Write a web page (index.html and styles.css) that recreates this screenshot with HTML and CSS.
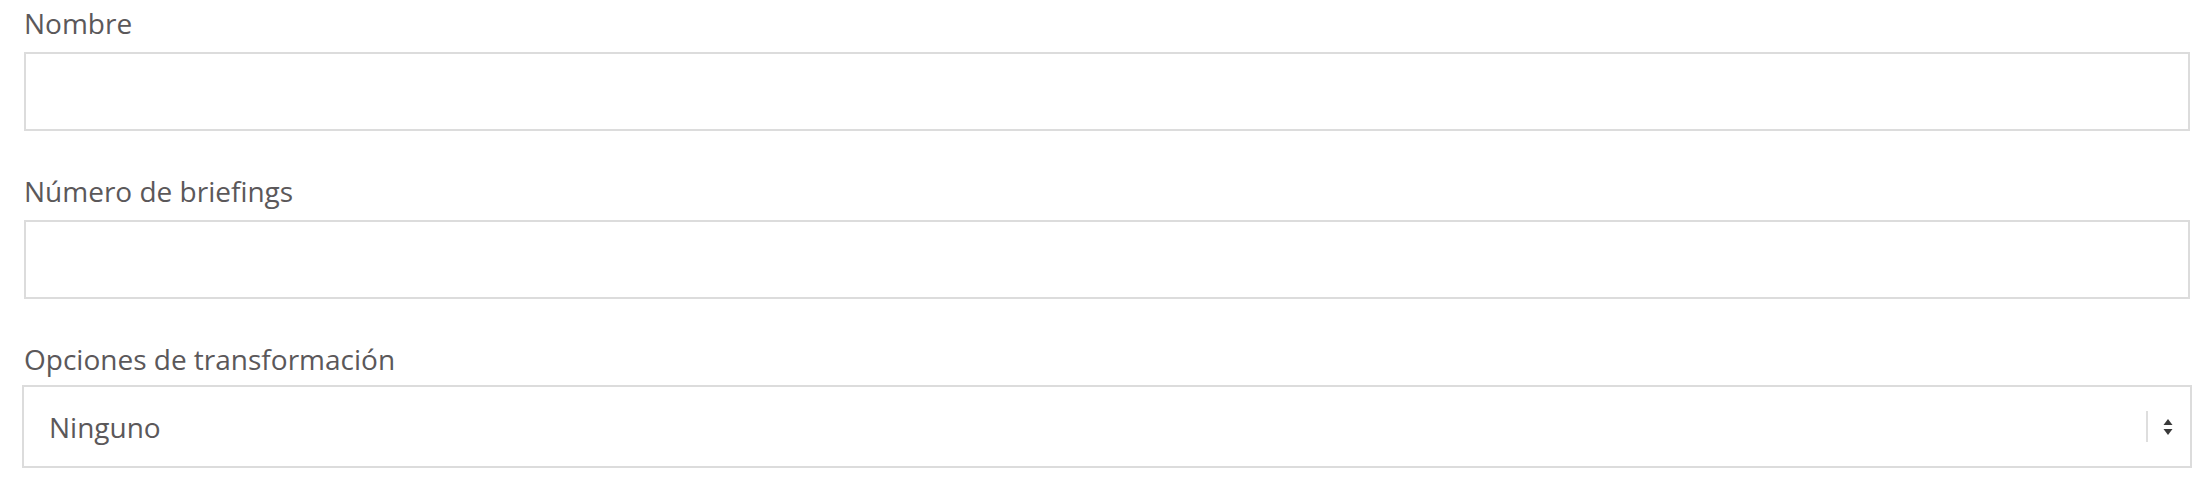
FILE: index.html
```html
<!DOCTYPE html>
<html lang="es">
<head>
<meta charset="utf-8">
<title>Formulario</title>
<link rel="stylesheet" href="styles.css">
</head>
<body>
<form class="form">
  <div class="field">
    <label class="field-label" for="nombre">Nombre</label>
    <input class="field-input" id="nombre" type="text">
  </div>
  <div class="field">
    <label class="field-label" for="briefings">Número de briefings</label>
    <input class="field-input" id="briefings" type="text">
  </div>
  <div class="field">
    <label class="field-label" for="opciones">Opciones de transformación</label>
    <div class="select" id="opciones">
      <span class="select-value">Ninguno</span>
      <span class="select-indicators">
        <span class="select-sep"></span>
        <svg class="select-arrows" width="12" height="18" viewBox="0 0 12 18">
          <path d="M6 1 L10.5 7 L1.5 7 Z" fill="#3a3a3a"/>
          <path d="M6 17 L10.5 11 L1.5 11 Z" fill="#3a3a3a"/>
        </svg>
      </span>
    </div>
  </div>
</form>
</body>
</html>
```

FILE: styles.css
```css
html, body {
  margin: 0;
  padding: 0;
  background: #ffffff;
}

body {
  font-family: "Open Sans", "Noto Sans", sans-serif;
  color: #5b585a;
}

.form {
  padding: 3px 20px 0 24px;
  display: flex;
  flex-direction: column;
  gap: 40px;
}

.field {
  display: flex;
  flex-direction: column;
}

.field-label {
  font-size: 28px;
  line-height: 40px;
  margin-bottom: 9px;
}

.field-input {
  box-sizing: border-box;
  height: 79px;
  width: 100%;
  border: 2px solid #dcdcdc;
  border-radius: 0;
  background: #fff;
  margin: 0;
  outline: none;
  font: inherit;
}

.select {
  box-sizing: border-box;
  height: 83px;
  margin: -3px -2px 0 -2px;
  border: 2px solid #dcdcdc;
  background: #fff;
  display: flex;
  align-items: center;
  justify-content: space-between;
  padding: 0 16px 0 25px;
}

.select-value {
  font-size: 28px;
  line-height: 40px;
  color: #5b585a;
}

.select-indicators {
  display: flex;
  align-items: center;
  gap: 14px;
}

.select-sep {
  width: 2px;
  height: 31px;
  background: #dedede;
}

.select-arrows {
  display: block;
}
```
